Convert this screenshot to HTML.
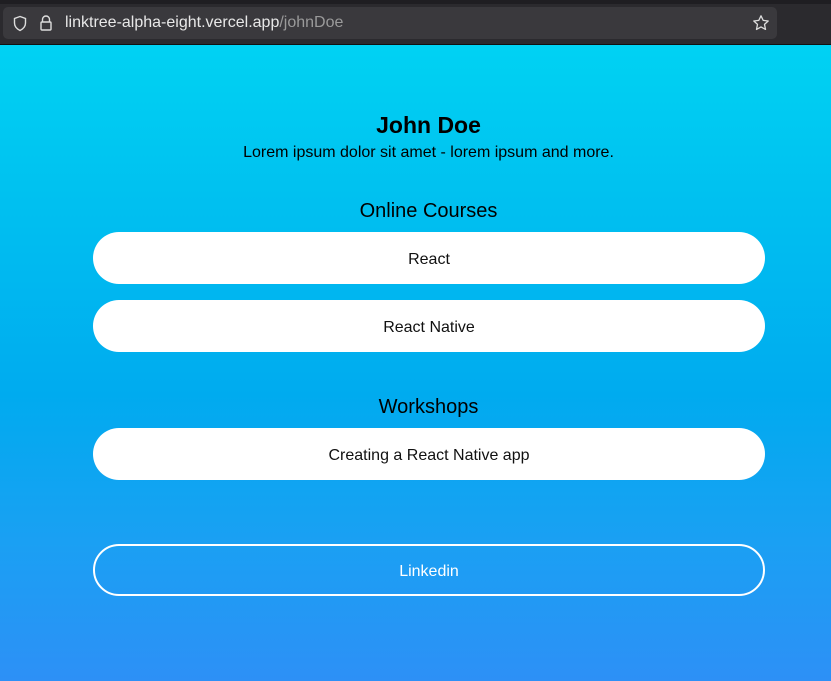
<!DOCTYPE html>
<html><head><meta charset="utf-8"><style>
*{margin:0;padding:0;box-sizing:border-box}
body{width:831px;height:681px;overflow:hidden;font-family:"Liberation Sans",sans-serif;position:relative;background:#2b2a33}
.top{position:absolute;left:0;top:0;width:831px;height:44px;background:#2b2a2e}
.top .strip{position:absolute;left:0;top:0;width:831px;height:4px;background:#1f1e22}
.url{position:absolute;left:3px;top:7px;width:774px;height:32px;background:#3a393d;border-radius:5px}
.url .t{position:absolute;left:62px;top:7px;font-size:16px;color:#e8e8e8}
.url .t span{color:#9a9a9a}
.page{position:absolute;left:0;top:44px;width:831px;height:637px;background:linear-gradient(#00d2f3 0%,#00c0f0 25%,#00abef 55%,#1aa0f3 78%,#2d90f6 100%);border-top:1px solid #111}
.c{position:absolute;left:13px;width:831px;text-align:center;color:#000}
.btn{position:absolute;left:93px;width:672px;height:52px;border-radius:26px;background:#fff;text-align:center;line-height:55px;font-size:16px;color:#111}
.out{background:transparent;border:2px solid #fff;color:#fff;line-height:51px}
</style></head><body>
<div class="top"><div class="strip"></div>
<div class="url">
<svg style="position:absolute;left:9px;top:8px" width="16" height="17" viewBox="0 0 16 17"><path d="M8 1.5L2.5 3.5V8c0 3.5 2.5 6 5.5 7.5 3-1.5 5.5-4 5.5-7.5V3.5z" fill="none" stroke="#ddd" stroke-width="1.4"/></svg>
<svg style="position:absolute;left:36px;top:7px" width="14" height="18" viewBox="0 0 14 18"><path d="M3.5 8V5.5a3.5 3.5 0 017 0V8" fill="none" stroke="#ddd" stroke-width="1.4"/><rect x="2" y="8" width="10" height="8" rx="1" fill="none" stroke="#ddd" stroke-width="1.4"/></svg>
<div class="t">linktree-alpha-eight.vercel.app<span>/johnDoe</span></div>
<svg style="position:absolute;left:749px;top:7px" width="18" height="18" viewBox="0 0 18 18"><path d="M9 1.8l2.2 4.6 5 .6-3.7 3.4 1 5-4.5-2.5-4.5 2.5 1-5L1.8 7l5-.6z" fill="none" stroke="#ddd" stroke-width="1.3" stroke-linejoin="round"/></svg>
</div></div>
<div class="page"></div>
<div class="c" style="top:112px;font-size:23px;font-weight:bold">John Doe</div>
<div class="c" style="top:144px;font-size:16px">Lorem ipsum dolor sit amet - lorem ipsum and more.</div>
<div class="c" style="top:200px;font-size:20px">Online Courses</div>
<div class="btn" style="top:232px">React</div>
<div class="btn" style="top:300px">React Native</div>
<div class="c" style="top:396px;font-size:20px">Workshops</div>
<div class="btn" style="top:428px">Creating a React Native app</div>
<div class="btn out" style="top:544px">Linkedin</div>
</body></html>
